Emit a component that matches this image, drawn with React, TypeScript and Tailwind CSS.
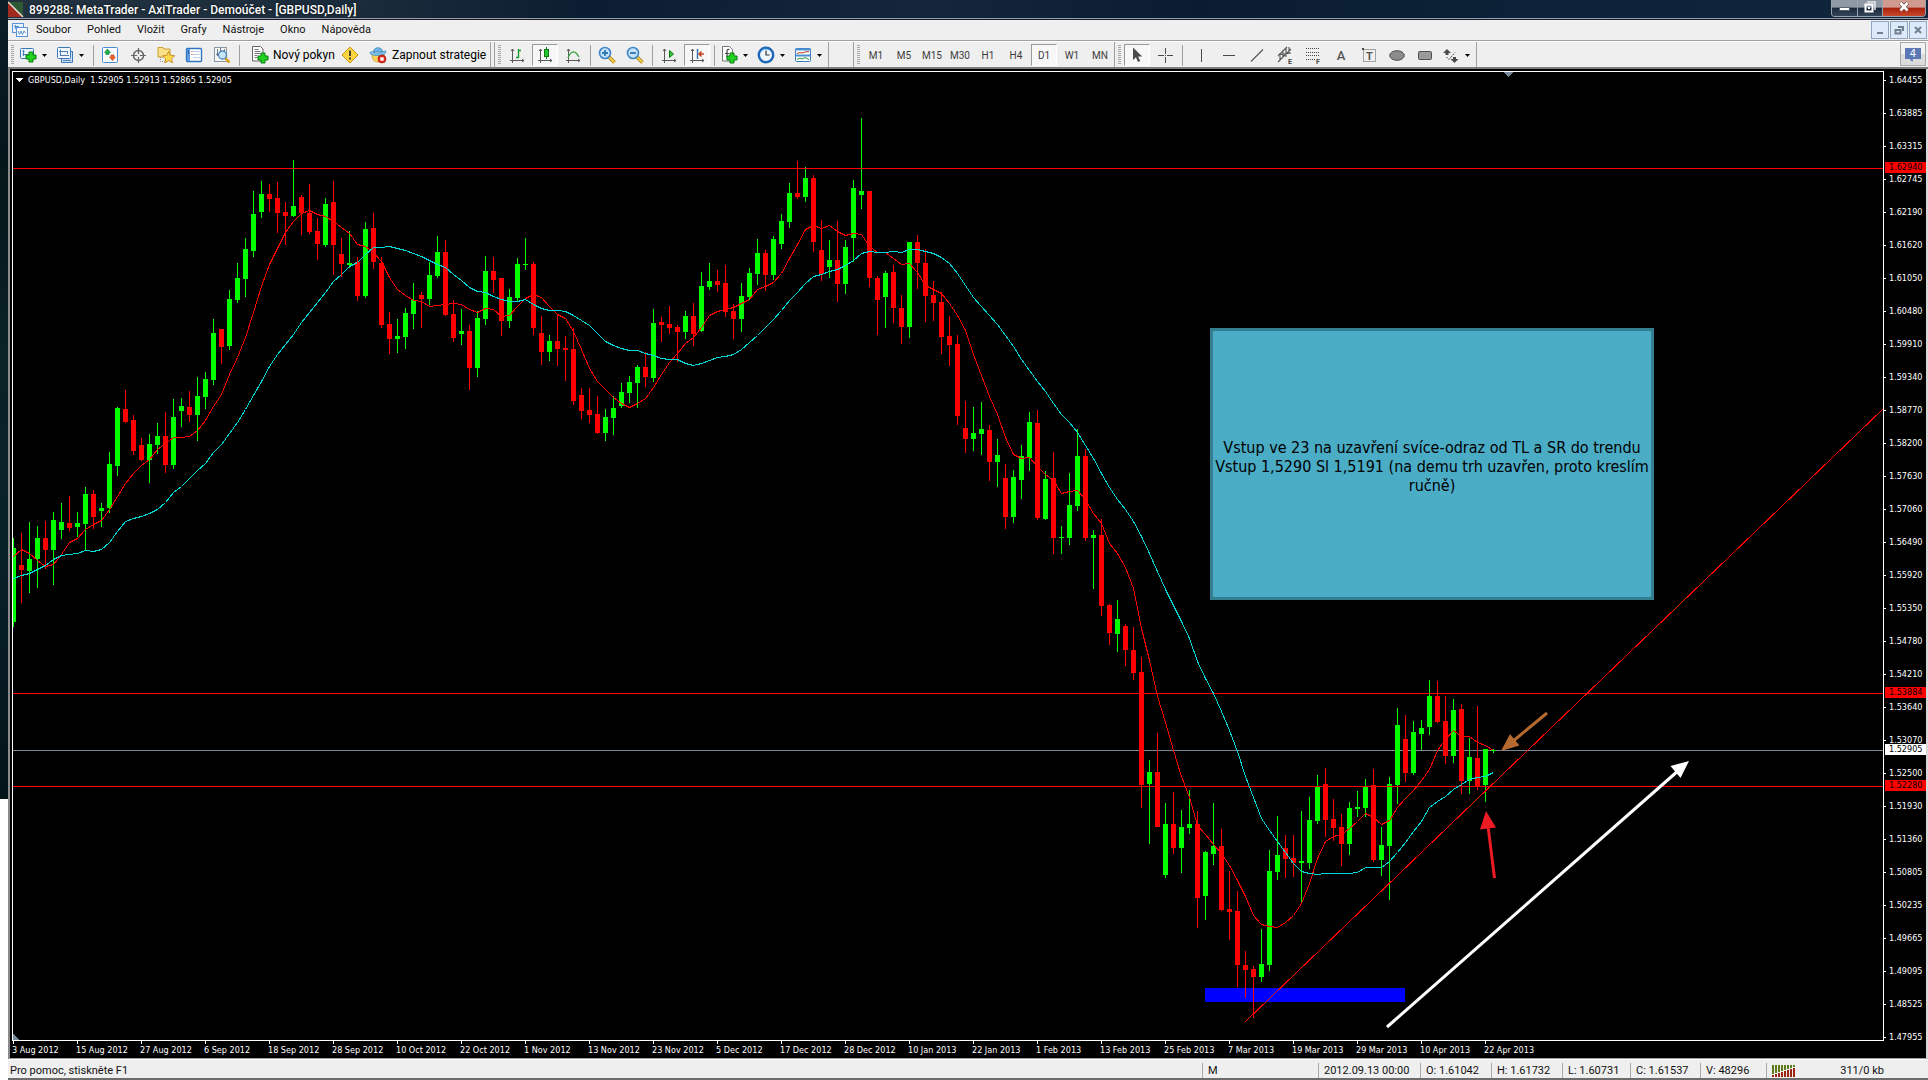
import type { ReactNode } from 'react';

type Candle = [dir: 'u' | 'd', high: number, top: number, bottom: number, low: number];

// one bar per trading day, 8 units apart, values are chart heights
const CANDLES: Candle[] = [
  ['u', 538, 548, 622, 627], ['d', 533, 565, 570, 603], ['u', 522, 559, 571, 593], ['u', 526, 538, 559, 588],
  ['d', 521, 538, 550, 569], ['u', 512, 520, 550, 585], ['u', 503, 522, 530, 539], ['d', 496, 523, 528, 531],
  ['u', 512, 523, 527, 537], ['u', 487, 494, 524, 550], ['d', 490, 494, 517, 529], ['u', 503, 508, 511, 527],
  ['u', 452, 464, 508, 513], ['u', 407, 408, 466, 476], ['d', 390, 409, 422, 423], ['d', 415, 420, 451, 455],
  ['d', 438, 445, 460, 461], ['u', 434, 444, 460, 483], ['u', 423, 436, 445, 454], ['d', 412, 436, 465, 473],
  ['u', 399, 417, 465, 469], ['u', 398, 406, 411, 427], ['d', 391, 407, 415, 422], ['u', 377, 396, 415, 441],
  ['u', 372, 379, 397, 409], ['u', 319, 333, 380, 385], ['d', 329, 329, 347, 364], ['u', 290, 299, 346, 350],
  ['u', 263, 278, 300, 303], ['u', 238, 249, 279, 297], ['u', 191, 214, 251, 257], ['u', 181, 194, 212, 218],
  ['d', 184, 194, 199, 212], ['d', 182, 198, 213, 233], ['d', 202, 212, 216, 245], ['u', 160, 206, 216, 217],
  ['d', 195, 197, 213, 235], ['d', 184, 213, 232, 234], ['d', 218, 231, 244, 260], ['u', 198, 204, 245, 247],
  ['d', 181, 202, 245, 275], ['d', 238, 254, 264, 277], ['u', 231, 263, 265, 268], ['d', 257, 262, 296, 301],
  ['u', 222, 229, 296, 298], ['d', 213, 228, 262, 269], ['d', 257, 263, 325, 328], ['d', 312, 324, 339, 354],
  ['u', 319, 336, 339, 353], ['u', 308, 313, 337, 349], ['u', 283, 300, 314, 329], ['d', 292, 295, 299, 328],
  ['u', 262, 275, 299, 305], ['u', 236, 252, 276, 278], ['d', 240, 252, 315, 316], ['d', 300, 314, 338, 342],
  ['u', 309, 331, 334, 345], ['d', 325, 331, 368, 390], ['u', 311, 318, 368, 377], ['u', 256, 271, 319, 325],
  ['d', 257, 271, 280, 293], ['d', 278, 278, 321, 336], ['u', 289, 297, 321, 328], ['u', 258, 264, 298, 301],
  ['u', 238, 264, 265, 270], ['d', 262, 264, 328, 335], ['d', 316, 333, 352, 365], ['u', 335, 341, 352, 361],
  ['d', 314, 341, 349, 366], ['d', 336, 348, 350, 381], ['d', 328, 349, 401, 405], ['d', 388, 395, 411, 419],
  ['d', 388, 410, 415, 423], ['d', 396, 414, 433, 434], ['u', 409, 417, 433, 441], ['u', 396, 408, 418, 435],
  ['u', 383, 392, 406, 408], ['u', 376, 382, 393, 403], ['u', 365, 367, 383, 408], ['d', 352, 367, 377, 387],
  ['u', 309, 323, 378, 382], ['d', 317, 322, 325, 342], ['d', 306, 324, 328, 334], ['d', 325, 327, 332, 362],
  ['u', 311, 316, 332, 339], ['d', 303, 316, 334, 346], ['u', 272, 286, 331, 332], ['u', 263, 281, 287, 290],
  ['d', 270, 281, 285, 292], ['d', 265, 283, 312, 317], ['d', 304, 311, 319, 339], ['u', 283, 296, 319, 332],
  ['u', 268, 273, 297, 300], ['u', 239, 253, 274, 285], ['d', 250, 253, 275, 291], ['u', 236, 239, 275, 280],
  ['u', 214, 221, 244, 249], ['u', 183, 193, 222, 228], ['d', 161, 193, 197, 199], ['u', 167, 178, 197, 202],
  ['d', 175, 178, 242, 252], ['d', 220, 250, 274, 281], ['u', 240, 260, 267, 278], ['d', 221, 260, 284, 302],
  ['u', 240, 247, 284, 294], ['u', 180, 188, 238, 262], ['u', 118, 191, 195, 209], ['d', 191, 191, 278, 287],
  ['d', 276, 278, 300, 335], ['u', 271, 273, 297, 328], ['d', 265, 272, 308, 323], ['d', 295, 308, 327, 344],
  ['u', 242, 242, 327, 338], ['d', 235, 242, 263, 289], ['d', 249, 263, 296, 322], ['d', 281, 295, 303, 321],
  ['d', 292, 302, 337, 354], ['d', 316, 336, 345, 366], ['d', 335, 344, 416, 425], ['d', 401, 428, 439, 453],
  ['u', 407, 433, 439, 451], ['u', 402, 429, 434, 455], ['d', 425, 430, 462, 481], ['u', 439, 455, 462, 487],
  ['d', 464, 478, 517, 529], ['u', 470, 477, 517, 523], ['u', 445, 456, 480, 499], ['u', 412, 422, 458, 471],
  ['d', 410, 423, 518, 520], ['u', 471, 479, 519, 520], ['d', 452, 478, 538, 554], ['u', 526, 537, 538, 554],
  ['u', 473, 505, 538, 545], ['u', 429, 456, 506, 511], ['d', 449, 456, 538, 541], ['u', 530, 535, 538, 589],
  ['d', 519, 535, 606, 616], ['d', 604, 605, 633, 645], ['u', 600, 619, 634, 652], ['d', 624, 626, 650, 666],
  ['d', 627, 650, 673, 680], ['d', 657, 672, 785, 808], ['u', 760, 772, 784, 844], ['d', 733, 772, 827, 827],
  ['u', 803, 824, 875, 878], ['d', 792, 824, 848, 854], ['u', 810, 827, 848, 873], ['u', 790, 824, 828, 834],
  ['d', 811, 824, 898, 928], ['u', 851, 852, 896, 920], ['u', 803, 846, 854, 865], ['d', 829, 846, 910, 911],
  ['d', 871, 909, 912, 940], ['d', 891, 911, 965, 987], ['d', 951, 965, 970, 998], ['d', 966, 969, 977, 1018],
  ['u', 929, 964, 977, 982], ['u', 850, 871, 965, 971], ['u', 816, 855, 872, 880], ['d', 835, 848, 859, 878],
  ['d', 835, 858, 863, 877], ['u', 811, 861, 863, 904], ['u', 797, 820, 863, 869], ['u', 775, 787, 821, 824],
  ['d', 768, 784, 820, 837], ['d', 799, 819, 828, 841], ['d', 814, 827, 844, 866], ['u', 802, 808, 844, 855],
  ['u', 791, 807, 809, 817], ['u', 779, 787, 808, 817], ['d', 769, 785, 860, 862], ['u', 827, 845, 860, 876],
  ['u', 777, 784, 846, 900], ['u', 708, 725, 785, 804], ['d', 715, 739, 773, 782], ['u', 721, 732, 773, 775],
  ['u', 720, 728, 734, 750], ['u', 680, 696, 727, 735], ['d', 681, 696, 722, 723], ['d', 696, 721, 756, 764],
  ['u', 699, 710, 756, 763], ['d', 704, 709, 781, 794], ['u', 738, 757, 781, 794], ['d', 706, 758, 786, 790],
  ['u', 749, 749, 785, 802], ['u', 749, 750, 751, 753],
];

const FAST_MA = [
  556, 549, 553, 560, 566, 564, 554, 542, 538, 529, 524, 520, 509, 496, 483, 473, 465, 459, 449, 443, 437, 437, 436, 430,
  420, 406, 394, 374, 357, 337, 312, 286, 264, 248, 232, 221, 213, 210, 214, 216, 221, 227, 233, 244, 246, 252, 261, 277,
  289, 295, 300, 301, 306, 305, 304, 303, 304, 309, 312, 308, 309, 316, 315, 306, 298, 294, 297, 306, 314, 318, 331, 349,
  368, 381, 389, 397, 403, 407, 403, 398, 387, 374, 362, 353, 343, 337, 327, 315, 311, 309, 307, 303, 299, 289, 286, 282,
  273, 258, 244, 229, 225, 228, 225, 231, 235, 233, 234, 246, 252, 252, 258, 264, 263, 272, 285, 289, 293, 303, 315, 330,
  354, 375, 396, 414, 437, 454, 458, 457, 466, 474, 480, 493, 491, 490, 499, 513, 523, 543, 553, 567, 588, 628, 660, 696,
  722, 750, 776, 797, 825, 834, 844, 853, 865, 880, 896, 915, 924, 926, 927, 922, 915, 903, 883, 858, 841, 836, 834, 828,
  821, 813, 817, 824, 820, 807, 798, 790, 780, 769, 750, 739, 730, 736, 736, 742, 745, 750,
];

const SLOW_MA = [
  578, 575, 573, 569, 565, 559, 555, 554, 553, 550, 551, 549, 542, 531, 521, 518, 516, 513, 509, 502, 492, 486, 478, 470,
  463, 452, 444, 433, 422, 409, 395, 381, 366, 354, 344, 334, 322, 312, 302, 292, 281, 274, 266, 262, 254, 247, 247, 246,
  248, 250, 253, 256, 260, 264, 267, 274, 280, 287, 291, 292, 296, 299, 301, 301, 299, 304, 308, 310, 310, 311, 315, 320,
  325, 333, 341, 345, 348, 350, 350, 353, 355, 358, 359, 359, 363, 365, 363, 360, 357, 356, 354, 349, 342, 335, 327, 319,
  310, 300, 292, 283, 276, 274, 271, 269, 265, 260, 253, 251, 252, 252, 251, 252, 249, 249, 251, 253, 257, 263, 273, 285,
  297, 306, 315, 324, 335, 346, 359, 370, 381, 391, 403, 414, 422, 432, 445, 458, 473, 487, 499, 509, 521, 536, 553, 571,
  589, 605, 621, 638, 661, 678, 693, 711, 730, 751, 776, 797, 818, 830, 841, 852, 863, 871, 873, 874, 873, 873, 873, 873,
  872, 867, 867, 867, 861, 852, 842, 831, 821, 807, 801, 796, 789, 784, 779, 777, 776, 772,
];

const PRICES = [
  '1.64455', '1.63885', '1.63315', '1.62745', '1.62190', '1.61620', '1.61050', '1.60480', '1.59910', '1.59340',
  '1.58770', '1.58200', '1.57630', '1.57060', '1.56490', '1.55920', '1.55350', '1.54780', '1.54210', '1.53640',
  '1.53070', '1.52500', '1.51930', '1.51360', '1.50805', '1.50235', '1.49665', '1.49095', '1.48525', '1.47955',
];

const LEVELS = [
  { price: '1.62940', tone: 'bg-[#ff0000]' },
  { price: '1.53884', tone: 'bg-[#ff0000]' },
  { price: '1.52280', tone: 'bg-[#ff0000]' },
  { price: '1.52905', tone: 'bg-white' },
];

const DATES = [
  '3 Aug 2012', '15 Aug 2012', '27 Aug 2012', '6 Sep 2012', '18 Sep 2012', '28 Sep 2012', '10 Oct 2012', '22 Oct 2012',
  '1 Nov 2012', '13 Nov 2012', '23 Nov 2012', '5 Dec 2012', '17 Dec 2012', '28 Dec 2012', '10 Jan 2013', '22 Jan 2013',
  '1 Feb 2013', '13 Feb 2013', '25 Feb 2013', '7 Mar 2013', '19 Mar 2013', '29 Mar 2013', '10 Apr 2013', '22 Apr 2013',
];

const MENU = ['Soubor', 'Pohled', 'Vložit', 'Grafy', 'Nástroje', 'Okno', 'Nápověda'];
const TIMEFRAMES = ['M1', 'M5', 'M15', 'M30', 'H1', 'H4', 'D1', 'W1', 'MN'];

const barX = (i: number) => 13 + i * 8;
const toPoints = (values: number[]) => values.map((y, i) => `${barX(i) + 0.5},${y + 0.5}`).join(' ');

function Icon({ children, size = 18 }: { children: ReactNode; size?: number }) {
  return (
    <svg width={size} height={size} viewBox={`0 0 ${size} ${size}`} aria-hidden="true" className="shrink-0">
      {children}
    </svg>
  );
}

function Plus({ x, y }: { x: number; y: number }) {
  return (
    <path
      transform={`translate(${x} ${y})`}
      d="M3.5.5h4v3h3v4h-3v3h-4v-3h-3v-4h3z"
      fill="#1fd31f"
      stroke="#0b7d12"
    />
  );
}

// L-shaped axes shared by all chart type icons
function Axes() {
  return (
    <path d="M4.500 3v14M2 14.500h14M3 5l1.500-2 1.500 2M14 13l2 1.500-2 1.500" fill="none" stroke="#5a5a5a" />
  );
}

function NewChartIcon() {
  return (
    <Icon>
      <rect x="1.5" y="2.5" width="13" height="10" rx="1" fill="#e9f3fd" stroke="#3b78b8" />
      <path d="M4.500 4v6M3.500 5.500h2M3.500 8.500h7" stroke="#4d7fb2" />
      <Plus x={6.5} y={5.5} />
    </Icon>
  );
}

function ProfilesIcon() {
  return (
    <Icon>
      <path d="M5.500 5.500h11v11h-11z" fill="#cfe2f5" stroke="#3b78b8" />
      <rect x="1.500" y="1.500" width="13" height="11" rx="1" fill="#f1f7fd" stroke="#3b78b8" />
      <path d="M4.500 3.500v6M3 5.500h8M11.500 5v3M4 9.500h9M7 14.500h8" stroke="#4d7fb2" fill="none" />
    </Icon>
  );
}

function MarketWatchIcon() {
  return (
    <Icon>
      <rect x="1.500" y="1.500" width="15" height="15" rx="1" fill="#fff" stroke="#4a8ad0" />
      <path d="M4 5h10M4 8h10M4 11h10M4 14h10" stroke="#cfdff0" strokeDasharray="1 1" />
      <path d="M6.500 3l3 3.500H8v2H5v-2H3.500z" fill="#22b14c" stroke="#0c7a28" strokeWidth=".6" />
      <path d="M11.500 14.500l3-3.500H13V9h-3v2H8.500z" fill="#f0642c" stroke="#b03a10" strokeWidth=".6" />
    </Icon>
  );
}

function TargetIcon() {
  return (
    <Icon>
      <circle cx="9.500" cy="9.500" r="5" fill="none" stroke="#666" strokeWidth="1.500" />
      <path d="M9.500 2v15M2 9.500h15" stroke="#666" strokeWidth="1.200" />
      <circle cx="9.500" cy="9.500" r="1.500" fill="#efefef" />
    </Icon>
  );
}

function NavigatorIcon() {
  return (
    <Icon>
      <path d="M1 1.500h5l1 1.500h6v8H1z" fill="#fbe08a" stroke="#c99a2e" />
      <path d="M3.500 11v4.500h4" stroke="#888" strokeDasharray="1 1" fill="none" />
      <path d="M11.700 5.500l1.800 3.800 4.200.5-3.100 2.800.9 4.300-3.800-2.200-3.900 2.200.8-4.200-3-2.900 4.200-.4z" fill="#ffd84a" stroke="#b97f16" strokeWidth=".8" />
    </Icon>
  );
}

function TerminalIcon() {
  return (
    <Icon>
      <rect x="1.500" y="2.500" width="15" height="13" rx="1" fill="#fff" stroke="#2f76c4" strokeWidth="1.400" />
      <path d="M2 3h3v12H2z" fill="#5d9ae0" />
      <path d="M3 5h1M3 7h1" stroke="#08294d" />
      <path d="M6.500 5.500h1M6.500 8.500h1" stroke="#d0301c" />
      <path d="M8 5.500h7M8 8.500h7M8 11.500h7" stroke="#a9c4e4" strokeWidth=".8" />
    </Icon>
  );
}

function TesterIcon() {
  return (
    <Icon>
      <rect x="1.500" y="1.500" width="12" height="14" fill="#f6f6f6" stroke="#8a97a5" />
      <path d="M4.500 3v7M3 8.500h3M7.500 2v5M11.500 3v3" stroke="#6d7987" />
      <path d="M12 12l4.500 4.500" stroke="#d6a21e" strokeWidth="2.500" />
      <circle cx="9.500" cy="9" r="4" fill="#bfe0f8" fillOpacity=".85" stroke="#4a86bd" strokeWidth="1.300" />
    </Icon>
  );
}

function NewOrderIcon() {
  return (
    <Icon>
      <path d="M1.500.5h8l2.500 2.500v12h-10.500z" fill="#fff" stroke="#666" />
      <path d="M3.500 3.500h4M3.500 5.500h6M3.500 7.500h6M3.500 9.500h3M3.500 11.500h3" stroke="#777" />
      <Plus x={6.5} y={6.5} />
    </Icon>
  );
}

function WarningIcon() {
  return (
    <Icon>
      <path d="M9 1L17 9l-8 8-8-8z" fill="#fdd53f" stroke="#c6940f" strokeLinejoin="round" />
      <path d="M9 4.500v5.500M9 11.500v2" stroke="#333" strokeWidth="1.800" />
    </Icon>
  );
}

function ExpertIcon() {
  return (
    <Icon>
      <path d="M3 8c0 5 2 8 6 8s6-3 6-8z" fill="#fbd35a" stroke="#c99320" strokeWidth=".8" />
      <path d="M4.500 5.500c0-5 9-5 9 0z" fill="#6cb6e8" stroke="#3d86bb" strokeWidth=".8" />
      <path d="M1 6.500c1-2 4 .5 8 .500s7-3 8-1.500c.6 2-4 4-8 4s-8.500-1-8-3z" fill="#83c5ef" stroke="#3d86bb" strokeWidth=".8" />
      <circle cx="13" cy="13" r="4" fill="#dd2a1b" stroke="#9c1409" strokeWidth=".6" />
      <rect x="11.300" y="11.300" width="3.400" height="3.400" fill="#fff" />
    </Icon>
  );
}

function BarChartIcon() {
  return (
    <Icon>
      <Axes />
      <path d="M10.500 3v9M8 11.500h2.500M10.500 4.500H13" stroke="#1a9a2a" strokeWidth="1.400" />
    </Icon>
  );
}

function CandleChartIcon() {
  return (
    <Icon>
      <Axes />
      <path d="M10.500 1v12" stroke="#0b7d12" />
      <rect x="8.500" y="3.500" width="4" height="7" fill="#25c52f" stroke="#0b7d12" />
    </Icon>
  );
}

function LineChartIcon() {
  return (
    <Icon>
      <Axes />
      <path d="M4 12c3-8 7-8 11-1" fill="none" stroke="#3aa646" strokeWidth="1.300" />
    </Icon>
  );
}

function ZoomIcon({ plus }: { plus?: boolean }) {
  return (
    <Icon>
      <path d="M11 11l5.500 5.500" stroke="#a57b12" strokeWidth="3.600" />
      <path d="M11 11l5.500 5.500" stroke="#f2cb4a" strokeWidth="2" />
      <circle cx="7" cy="7" r="5.500" fill="#c5e4fa" stroke="#3f86c6" strokeWidth="1.600" />
      <path d={plus ? 'M4 7h6M7 4v6' : 'M4 7h6'} stroke="#2f78b4" strokeWidth="1.800" />
    </Icon>
  );
}

function AutoScrollIcon() {
  return (
    <Icon>
      <Axes />
      <path d="M9.500 4.500l4 3.500-4 3.500z" fill="#2fc23a" stroke="#0b7d12" />
    </Icon>
  );
}

function ChartShiftIcon() {
  return (
    <Icon>
      <Axes />
      <path d="M9.500 3v10" stroke="#2c6db0" strokeWidth="1.400" />
      <path d="M16 8h-4M13.500 5.500L11 8l2.500 2.500" fill="none" stroke="#c8401a" strokeWidth="1.500" />
    </Icon>
  );
}

function IndicatorsIcon() {
  return (
    <Icon>
      <path d="M2.500.500h7l3 3v11.500h-10z" fill="#fff" stroke="#777" />
      <path d="M9.500 3.500c-2-.5-2.500.5-2.500 2v6M5 7.500h4" fill="none" stroke="#444" strokeWidth="1.200" />
      <Plus x={6.5} y={6.5} />
    </Icon>
  );
}

function ClockIcon() {
  return (
    <Icon>
      <circle cx="9" cy="9" r="7.200" fill="#eef5fc" stroke="#1d66b8" strokeWidth="2.400" />
      <path d="M5 4.500a6 6 0 0 1 6-1" fill="none" stroke="#6cc0f5" />
      <path d="M9 4.500V9h3.500" fill="none" stroke="#333" strokeWidth="1.200" />
    </Icon>
  );
}

function TemplatesIcon() {
  return (
    <Icon>
      <rect x="1.500" y="2.500" width="15" height="13" rx="1" fill="#fff" stroke="#3b7fc4" />
      <path d="M1.500 3.500h15M2 9.500h14" stroke="#4b8fd4" strokeWidth="1.800" />
      <path d="M3 7.500l3-1 2 .5 3-1 4-.5" stroke="#b03a1c" fill="none" />
      <path d="M3 13.500l3-1.500 2 1 3-1.500 4 2" stroke="#2a9238" fill="none" />
    </Icon>
  );
}

function DrawIcon({ name }: { name: string }) {
  return (
    <Icon>
      {name === 'Kurzor' && <path d="M5 1.500v12.500l3-2.800 2 4.800 2.200-1-2-4.600h4z" fill="#4a4a4a" />}
      {name === 'Nitkový kříž' && <path d="M9.500 2v6M9.500 11v6M2 9.500h6M11 9.500h6M9 9.500h1" stroke="#4a4a4a" />}
      {name === 'Svislá čára' && <path d="M9.500 3v13" stroke="#4a4a4a" />}
      {name === 'Vodorovná čára' && <path d="M3 9.500h12" stroke="#4a4a4a" />}
      {name === 'Trendová čára' && <path d="M3 15.500L15 3.500" stroke="#5a5a5a" strokeWidth="1.300" />}
      {name === 'Ekvidistantní kanál' && (
        <>
          <path d="M2 10L11 1M2 16L15 3M4 7v7M7 4v8M10 2v9M13 1v6M2 9l13-2" stroke="#555" strokeWidth="1.100" fill="none" />
          <text x="12" y="17.500" fontSize="7" fontFamily="Roboto" fontWeight="700" fill="#444">E</text>
        </>
      )}
      {name === 'Fibonacci' && (
        <>
          <path d="M2 2.500h14M2 6.500h14M2 9.500h14M2 13.500h9" stroke="#444" strokeDasharray="1 1" />
          <text x="12" y="17.500" fontSize="7" fontFamily="Roboto" fontWeight="700" fill="#444">F</text>
        </>
      )}
      {name === 'Text' && (
        <text x="9" y="14" textAnchor="middle" fontSize="13" fontFamily="Roboto" fontWeight="500" fill="#555">A</text>
      )}
      {name === 'Popisek' && (
        <>
          <rect x="3.500" y="3.500" width="12" height="12" fill="none" stroke="#555" strokeDasharray="1 1" />
          <rect x="2" y="2" width="2" height="2" fill="#444" />
          <text x="9.500" y="13.500" textAnchor="middle" fontSize="11" fontFamily="Roboto" fontWeight="700" fill="#555">T</text>
        </>
      )}
      {name === 'Elipsa' && <ellipse cx="9" cy="9.500" rx="7.300" ry="4.800" fill="#8c8c8c" stroke="#4f4f4f" />}
      {name === 'Obdélník' && <rect x="2.500" y="5.500" width="13" height="8" rx="1" fill="#9a9a9a" stroke="#4f4f4f" />}
      {name === 'Šipky' && (
        <>
          <path d="M5 3l4 4H6.500v2h-3V7H1zM12.500 17l-4-4h2.500v-2h3v2h2.500z" fill="#4a4a4a" />
          <path d="M4.500 11l2.500 2.500 6-7" fill="none" stroke="#4a4a4a" strokeDasharray="2 1" />
        </>
      )}
    </Icon>
  );
}

const DRAW_TOOLS = [
  'Svislá čára', 'Vodorovná čára', 'Trendová čára', 'Ekvidistantní kanál', 'Fibonacci', 'Text', 'Popisek', 'Elipsa', 'Obdélník',
];

const PRESSED =
  'border border-t-[#9a9a9a] border-l-[#9a9a9a] border-r-white border-b-white bg-[#f7f7f7]';

function ToolButton({ label, pressed, children }: { label: string; pressed?: boolean; children: ReactNode }) {
  return (
    <button
      type="button"
      aria-label={label}
      aria-pressed={pressed}
      className={`mx-px flex h-[22px] w-[26px] items-center justify-center ${pressed ? PRESSED : ''}`}
    >
      {children}
    </button>
  );
}

function DropButton({ label, children }: { label: string; children: ReactNode }) {
  return (
    <button type="button" aria-label={label} className="flex h-[22px] w-[37px] items-center gap-[5px] pl-[3px]">
      {children}
      <svg width="5" height="3" viewBox="0 0 5 3" aria-hidden="true">
        <path d="M0 0h5L2.500 3z" fill="#000" />
      </svg>
    </button>
  );
}

function Grip() {
  return (
    <span className="flex w-2 justify-center">
      <span className="h-5 w-[3px] bg-[repeating-linear-gradient(to_bottom,#a8a8a8_0_1px,#efefef_1px_2px)]" />
    </span>
  );
}

function Separator() {
  return (
    <span className="flex w-[6px] justify-center">
      <span className="h-[21px] w-px bg-[#a0a0a0]" />
    </span>
  );
}

function Band({ children }: { children?: ReactNode }) {
  return <div className="flex items-center border-r border-[#a0a0a0] pt-px">{children}</div>;
}

function TitleBar() {
  return (
    <header className="flex h-5 shrink-0 items-start border-b border-[#1c1c28] bg-[linear-gradient(100deg,#22323f_0%,#1b2c3c_18%,#0b1d30_30%,#14273a_48%,#0a1c30_62%,#0d2238_80%,#10253c_100%)] shadow-[inset_0_-1px_0_#8f9cab]">
      <svg width="16" height="16" viewBox="0 0 16 16" aria-hidden="true" className="mt-px">
        <path d="M0 1h15v15H0z" fill="#2d5a34" />
        <path d="M0 1l15 15H0z" fill="#a22b1f" />
        <path d="M0 1l15 15" stroke="#e9e4dc" strokeWidth="1.500" />
      </svg>
      <h1 className="ml-[5px] text-[12px] leading-5 font-medium text-white [text-shadow:0_0_2px_#000]">
        899288: MetaTrader - AxiTrader - Demoúčet - [GBPUSD,Daily]
      </h1>
      <div className="mr-[2px] ml-auto flex h-[17px] overflow-hidden rounded-b border border-t-0 border-[#97a2ae]">
        <button type="button" aria-label="Minimalizovat" className="flex w-[26px] justify-center border-r border-[#97a2ae] bg-[linear-gradient(#8e99a5_0_45%,#1b2a3a_50%,#35465a)]">
          <svg width="13" height="15" viewBox="0 0 13 15"><path d="M1.500 7.500h10v3h-10z" fill="#fff" stroke="#444c5a" strokeWidth=".8" /></svg>
        </button>
        <button type="button" aria-label="Obnovit" className="flex w-[25px] justify-center border-r border-[#97a2ae] bg-[linear-gradient(#8e99a5_0_45%,#1b2a3a_50%,#35465a)]">
          <svg width="14" height="15" viewBox="0 0 14 15">
            <path d="M4 2h8v8" fill="none" stroke="#e6e6e6" strokeWidth="1.500" />
            <rect x="2.500" y="4.500" width="7" height="7" fill="none" stroke="#fff" strokeWidth="2" />
            <rect x="5" y="7" width="2" height="2" fill="#fff" />
          </svg>
        </button>
        <button type="button" aria-label="Zavřít" className="flex w-[42px] justify-center bg-[linear-gradient(#d09a90_0_45%,#a8200c_50%,#c9482c)]">
          <svg width="14" height="15" viewBox="0 0 14 15">
            <path d="M3.500 3l7 7.500M10.500 3l-7 7.500" stroke="#5b3a3a" strokeWidth="4" />
            <path d="M3.500 3l7 7.500M10.500 3l-7 7.500" stroke="#fff" strokeWidth="2.600" />
          </svg>
        </button>
      </div>
    </header>
  );
}

function MdiButton({ label, d }: { label: string; d: string }) {
  return (
    <button type="button" aria-label={label} className="flex h-[18px] w-[18px] items-center justify-center border border-[#8ea6c4] bg-[#dceafa]">
      <svg width="12" height="12" viewBox="0 0 12 12" aria-hidden="true">
        <path d={d} fill="none" stroke="#71808f" strokeWidth="2" />
      </svg>
    </button>
  );
}

function MenuBar() {
  return (
    <nav className="flex h-[21px] shrink-0 items-center border-b border-[#a0a0a0] bg-[#efefef]">
      <svg width="16" height="16" viewBox="0 0 16 16" aria-hidden="true" className="ml-1">
        <rect x=".5" y="1.500" width="11" height="9" fill="#e7f1fc" stroke="#5b93d8" />
        <path d="M2 4.500h5M3.500 3v4" stroke="#5b93d8" />
        <rect x="4.500" y="5.500" width="11" height="9" fill="#f6faff" stroke="#5b93d8" />
        <path d="M6 9l1.500 3.500L9 9l1.500 3.500L12 9l1.500 2" fill="none" stroke="#5b93d8" />
      </svg>
      {MENU.map((item) => (
        <button key={item} type="button" className="px-2 text-[11px] leading-5 text-[#111]">
          {item}
        </button>
      ))}
      <div className="mr-px ml-auto flex gap-px">
        <MdiButton label="Minimalizovat graf" d="M3 9h6" />
        <MdiButton label="Obnovit graf" d="M5 3h5v4M2.500 6h5v3.500h-5z" />
        <MdiButton label="Zavřít graf" d="M3 3l6 6M9 3l-6 6" />
      </div>
    </nav>
  );
}

function Toolbars() {
  return (
    <div className="flex h-[28px] shrink-0 border-t border-t-white border-b-2 border-b-[#7d7d7d] bg-[#efefef] text-[12px]">
      <Band>
        <Grip />
        <DropButton label="Nový graf"><NewChartIcon /></DropButton>
        <DropButton label="Profily"><ProfilesIcon /></DropButton>
        <Separator />
        <ToolButton label="Tržní přehled"><MarketWatchIcon /></ToolButton>
        <ToolButton label="Datové okno"><TargetIcon /></ToolButton>
        <ToolButton label="Navigátor"><NavigatorIcon /></ToolButton>
        <ToolButton label="Terminál"><TerminalIcon /></ToolButton>
        <ToolButton label="Tester strategií"><TesterIcon /></ToolButton>
        <Separator />
        <button type="button" className="flex h-[22px] w-[94px] items-center gap-1 pl-[9px]">
          <NewOrderIcon />
          <span className="whitespace-nowrap">Nový pokyn</span>
        </button>
        <ToolButton label="MetaEditor"><WarningIcon /></ToolButton>
        <button type="button" className="flex h-[22px] w-[126px] items-center gap-[5px] pl-[5px]">
          <ExpertIcon />
          <span className="whitespace-nowrap">Zapnout strategie</span>
        </button>
      </Band>
      <span className="w-1 border-r border-[#a0a0a0]" />
      <Band>
        <Grip />
        <ToolButton label="Sloupcový graf"><BarChartIcon /></ToolButton>
        <ToolButton label="Svíčkový graf" pressed><CandleChartIcon /></ToolButton>
        <ToolButton label="Čárový graf"><LineChartIcon /></ToolButton>
        <Separator />
        <ToolButton label="Přiblížit"><ZoomIcon plus /></ToolButton>
        <ToolButton label="Oddálit"><ZoomIcon /></ToolButton>
        <Separator />
        <ToolButton label="Automatický posun"><AutoScrollIcon /></ToolButton>
        <ToolButton label="Odsazení grafu" pressed><ChartShiftIcon /></ToolButton>
        <Separator />
        <DropButton label="Indikátory"><IndicatorsIcon /></DropButton>
        <DropButton label="Periody"><ClockIcon /></DropButton>
        <DropButton label="Šablony"><TemplatesIcon /></DropButton>
      </Band>
      <span className="w-[25px] border-r border-[#a0a0a0]" />
      <Band>
        <Grip />
        {TIMEFRAMES.map((tf) => (
          <button
            key={tf}
            type="button"
            aria-pressed={tf === 'D1'}
            className={`mx-px h-[22px] w-[26px] text-center text-[10px] text-[#3c3c3c] ${tf === 'D1' ? PRESSED : ''}`}
          >
            {tf}
          </button>
        ))}
      </Band>
      <Band>
        <Grip />
        <ToolButton label="Kurzor" pressed><DrawIcon name="Kurzor" /></ToolButton>
        <ToolButton label="Nitkový kříž"><DrawIcon name="Nitkový kříž" /></ToolButton>
        <Separator />
        <div className="flex pl-[2px]">
          {DRAW_TOOLS.map((tool) => (
            <ToolButton key={tool} label={tool}><DrawIcon name={tool} /></ToolButton>
          ))}
          <DropButton label="Šipky"><DrawIcon name="Šipky" /></DropButton>
        </div>
      </Band>
      <button type="button" aria-label="Zprávy: 4" className="mr-[2px] ml-auto flex h-6 w-[26px] items-center justify-center border border-[#a8a8a8] bg-[linear-gradient(#f2f2f2_0_50%,#dcdcdc_50%)]">
        <Icon>
          <path d="M1 3h16v11H9l-.5 3-3-3H1z" fill="#5b78b5" />
          <text x="9" y="12" textAnchor="middle" fontSize="10" fontFamily="DejaVu Sans" fill="#fff">4</text>
        </Icon>
      </button>
    </div>
  );
}

function Plot() {
  return (
    <svg viewBox="13 72 1870 968" preserveAspectRatio="none" className="absolute inset-0 h-full w-full" role="img" aria-label="GBPUSD, Daily">
      <g shapeRendering="crispEdges">
        <rect x="1205" y="988" width="200" height="14" fill="#0000ff" />
        <path d="M13 750.500H1883" stroke="#778899" />
        {CANDLES.map(([dir, high, top, bottom, low], i) => (
          <g key={i} fill={dir === 'u' ? '#00ff00' : '#ff0000'}>
            <rect x={barX(i)} y={high} width="1" height={Math.max(low - high, 1)} />
            <rect x={barX(i) - 2} y={top} width="5" height={Math.max(bottom - top, 1)} />
          </g>
        ))}
        <path d="M13 168.500H1883M13 693.500H1883M13 786.500H1883" stroke="#ff0000" />
        <polyline points={toPoints(FAST_MA)} fill="none" stroke="#ff0000" />
        <polyline points={toPoints(SLOW_MA)} fill="none" stroke="#00d8d8" />
        <path d="M1245 1022L1883 409" stroke="#ff0000" />
        <path d="M1503 72h10l-5 5zM13 1034l6 6h-6z" fill="#778899" />
        <path d="M16 78h7l-3.500 4z" fill="#fff" />
      </g>
      <path d="M1387 1027L1679 770" stroke="#fff" strokeWidth="3" />
      <path d="M1689 761l-18.500 5 10 12z" fill="#fff" />
      <path d="M1494.500 878L1488 826" stroke="#ed1c24" strokeWidth="3" />
      <path d="M1486 811l-6 18.500 16-2z" fill="#ed1c24" />
      <path d="M1547 713L1512 742" stroke="#b5692e" strokeWidth="3" />
      <path d="M1501 751l9-17 9.500 11.500z" fill="#b5692e" />
    </svg>
  );
}

// position of a price between the first and the last scale label
function levelTop(price: string) {
  const frac = (1.64455 - Number(price)) / (1.64455 - 1.47955);
  return `calc(6px + (100% - 12px) * ${frac})`;
}

function PriceScale() {
  return (
    <div className="w-[42px] shrink-0 pt-[5px] pb-[15px]">
      <div className="relative flex h-full flex-col justify-between">
        {PRICES.map((price) => (
          <div key={price} className="flex h-3 items-center gap-[3px] leading-3">
            <span className="h-px w-[2px] bg-white" />
            {price}
          </div>
        ))}
        {LEVELS.map(({ price, tone }) => (
          <div key={price} className={`absolute right-0 left-px -mt-[6px] h-[11px] pl-1 leading-[11px] text-black ${tone}`} style={{ top: levelTop(price) }}>
            {price}
          </div>
        ))}
      </div>
    </div>
  );
}

function ChartWindow() {
  return (
    <main className="flex min-h-0 flex-1 border-r-2 border-b border-l-2 border-r-[#d8d8d8] border-b-[#a0a0a0] border-l-[#8a8a8a] bg-black pl-[2px] font-['DejaVu_Sans_Condensed','DejaVu_Sans',sans-serif] text-[9px] text-white">
      <div className="flex min-w-0 flex-1 flex-col pt-[2px]">
        <div className="relative min-h-0 flex-1 border border-white">
          <Plot />
          <div className="relative pt-[2px] pl-[15px] leading-3 whitespace-pre">
            GBPUSD,Daily  1.52905 1.52913 1.52865 1.52905
          </div>
          <div className="absolute top-[256px] left-[1197px] flex h-[272px] w-[444px] items-center justify-center border-[3px] border-[#357d91] bg-[#4bacc6] pt-1 text-center text-[16px] leading-[19px] text-black">
            <p>
              Vstup ve 23 na uzavření svíce-odraz od TL a SR do trendu
              <br />
              Vstup 1,5290 Sl 1,5191 (na demu trh uzavřen, proto kreslím ručně)
            </p>
          </div>
        </div>
        <div className="flex h-[17px] overflow-hidden">
          {DATES.map((date) => (
            <div key={date} className="w-16 shrink-0 leading-3 whitespace-nowrap">
              <span className="ml-px block h-[3px] w-px bg-white" />
              {date}
            </div>
          ))}
        </div>
      </div>
      <PriceScale />
    </main>
  );
}

function StatusBar() {
  const cell = 'border-l border-[#a8a8a8] pl-[5px] shrink-0';
  return (
    <footer className="flex h-[21px] shrink-0 items-center border-t border-b-2 border-t-white border-b-[#6c6c6c] bg-[#efefef] pt-[3px] text-[11px] leading-[15px] whitespace-nowrap text-[#111]">
      <span className="flex-1 pl-[2px]">Pro pomoc, stiskněte F1</span>
      <span className={`${cell} w-[116px]`}>M</span>
      <span className={`${cell} w-[102px]`}>2012.09.13 00:00</span>
      <span className={`${cell} w-[71px]`}>O: 1.61042</span>
      <span className={`${cell} w-[71px]`}>H: 1.61732</span>
      <span className={`${cell} w-[68px]`}>L: 1.60731</span>
      <span className={`${cell} w-[70px]`}>C: 1.61537</span>
      <span className={`${cell} w-[66px]`}>V: 48296</span>
      <span className={`${cell} flex w-[162px] items-center justify-between pr-[44px]`}>
        <svg width="24" height="12" viewBox="0 0 24 12" aria-hidden="true">
          {Array.from({ length: 8 }, (_, i) => (
            <g key={i}>
              <rect x={i * 3} y="0" width="2" height={Math.max(9 - i, 2)} fill="#5d7a1a" />
              <rect x={i * 3} y={10 - i} width="2" height={2 + i} fill="#9c2410" />
            </g>
          ))}
        </svg>
        311/0 kb
      </span>
    </footer>
  );
}

export default function App() {
  return (
    <div className="flex h-screen bg-white font-['Roboto','Noto_Sans',sans-serif]">
      <div className="w-2 shrink-0">
        <div className="h-[74%] bg-[linear-gradient(#0d1d28,#04161a_20%,#0a2226_45%,#082028_70%,#031419)]" />
      </div>
      <div className="flex min-w-0 flex-1 flex-col">
        <TitleBar />
        <MenuBar />
        <Toolbars />
        <ChartWindow />
        <StatusBar />
      </div>
    </div>
  );
}
